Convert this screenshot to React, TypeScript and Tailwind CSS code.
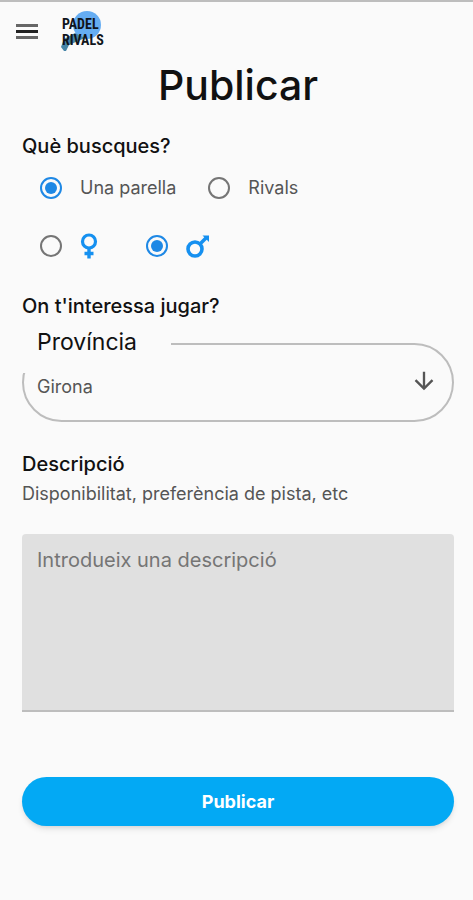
import React, { useState } from 'react';
import { MdArrowDownward } from 'react-icons/md';

const FemaleIcon = () => (
  <svg viewBox="0 0 18 26" className="h-[26px] w-[18px]" fill="none" stroke="#1590f0" aria-hidden="true">
    <circle cx="9" cy="8.5" r="6.5" strokeWidth="3.2" />
    <path d="M9 15v10.5M4.5 20.5h9" strokeWidth="3.4" />
  </svg>
);

const MaleIcon = () => (
  <svg viewBox="0 0 24 24" className="h-6 w-6" fill="none" stroke="#1590f0" aria-hidden="true">
    <circle cx="9" cy="15" r="7" strokeWidth="3.6" />
    <path d="M14 10L20 4" strokeWidth="3.6" />
    <path d="M16.5 1.5H23V8z" fill="#1590f0" stroke="none" />
  </svg>
);

const Logo = () => (
  <svg viewBox="0 0 46 42" className="h-[42px] w-[46px]" role="img" aria-label="Padel Rivals">
    <circle cx="27" cy="15" r="14" fill="#66adf2" />
    <path d="M15 23l10 5-7 3-9 4-3 6H4l-3-4 3-8z" fill="#4685a8" />
    <g
      fill="#10151b"
      fontWeight="700"
      fontSize="14"
      fontFamily="'Roboto Condensed', 'Open Sans Condensed', 'Liberation Sans Narrow', 'Roboto', sans-serif"
    >
      <text x="2" y="19">PADEL</text>
      <text x="2" y="35">RIVALS</text>
    </g>
  </svg>
);

const Radio = ({ name, value, label, current, onChange, children }: {
  name: string;
  value: string;
  label: string;
  current: string;
  onChange: (value: string) => void;
  children: React.ReactNode;
}) => (
  <label className="flex items-center gap-[18px]">
    <input
      type="radio"
      name={name}
      value={value}
      aria-label={label}
      checked={current === value}
      onChange={() => onChange(value)}
      className="grid size-[22px] shrink-0 appearance-none place-items-center rounded-full border-2 border-[#757575] before:size-3 before:rounded-full checked:border-[#1e88e5] checked:before:bg-[#1e88e5]"
    />
    {children}
  </label>
);

const App = () => {
  const [target, setTarget] = useState('parella');
  const [gender, setGender] = useState('home');
  const [province, setProvince] = useState('Girona');
  const [description, setDescription] = useState('');

  return (
    <div className="min-h-screen border-t-2 border-[#bdbdbd] bg-[#fafafa] font-['Inter','Open_Sans',sans-serif] text-[#111]">
      <header className="flex h-[58px] items-center gap-[22px] px-4">
        <button type="button" aria-label="Menú" className="flex w-[22px] flex-col gap-[3px]">
          <span className="h-[3px] bg-[#666]" />
          <span className="h-[3px] bg-[#222]" />
          <span className="h-[3px] bg-[#666]" />
        </button>
        <Logo />
      </header>

      <form className="pr-[19px] pl-[22px]" onSubmit={(e) => e.preventDefault()}>
        <h1 className="text-center text-[41px] leading-[50px] font-medium">Publicar</h1>

        {/* Què buscques */}
        <h2 className="mt-6 text-xl leading-6 font-medium">Què buscques?</h2>
        <div className="mt-[14px] flex h-8 items-center gap-8 pl-[18px] text-lg text-[#555]">
          <Radio name="target" value="parella" label="Una parella" current={target} onChange={setTarget}>
            Una parella
          </Radio>
          <Radio name="target" value="rivals" label="Rivals" current={target} onChange={setTarget}>
            Rivals
          </Radio>
        </div>
        <div className="mt-[26px] flex h-8 items-center gap-12 pl-[18px]">
          <Radio name="gender" value="dona" label="Dona" current={gender} onChange={setGender}>
            <FemaleIcon />
          </Radio>
          <Radio name="gender" value="home" label="Home" current={gender} onChange={setGender}>
            <MaleIcon />
          </Radio>
        </div>

        {/* Província */}
        <h2 className="mt-8 text-xl leading-6 font-medium">On t'interessa jugar?</h2>
        <div className="relative mt-[25px]">
          <select
            id="province"
            value={province}
            onChange={(e) => setProvince(e.target.value)}
            className="block h-[79px] w-full appearance-none rounded-full border-2 border-[#bdbdbd] bg-transparent px-[13px] pt-2 text-lg text-[#555]"
          >
            <option>Girona</option>
            <option>Barcelona</option>
            <option>Lleida</option>
            <option>Tarragona</option>
          </select>
          <label
            htmlFor="province"
            className="absolute -top-4 left-0 h-[46px] w-[149px] bg-[#fafafa] pl-[15px] text-[23px] leading-[30px]"
          >
            Província
          </label>
          <MdArrowDownward className="pointer-events-none absolute top-6 right-4 size-7 text-[#555]" />
        </div>

        {/* Descripció */}
        <h2 className="mt-[30px] text-xl leading-6 font-medium">
          <label htmlFor="description">Descripció</label>
        </h2>
        <p className="mt-[6px] text-lg leading-6 text-[#555]">Disponibilitat, preferència de pista, etc</p>
        <textarea
          id="description"
          value={description}
          onChange={(e) => setDescription(e.target.value)}
          placeholder="Introdueix una descripció"
          className="mt-7 block h-[178px] w-full resize-none rounded-t border-b-2 border-[#bdbdbd] bg-[#e0e0e0] px-[15px] py-3 text-xl leading-7 placeholder:text-[#757575]"
        />

        <button
          type="submit"
          className="mt-[65px] h-[49px] w-full rounded-full bg-[#03a9f4] text-lg font-bold text-white shadow-md"
        >
          Publicar
        </button>
      </form>
    </div>
  );
};

export default App;
